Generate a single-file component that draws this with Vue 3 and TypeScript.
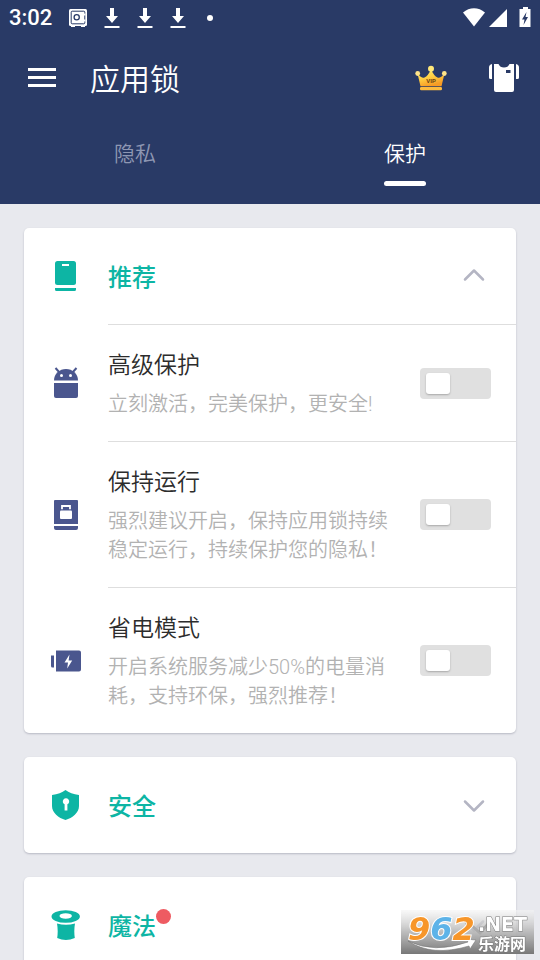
<script setup lang="ts">
import { reactive, ref } from 'vue'

interface Option {
  id: string
  icon: 'android' | 'lock' | 'battery'
  title: string
  detail: string
  enabled: boolean
}

interface Section {
  id: string
  icon: 'book' | 'shield' | 'hat'
  title: string
  open: boolean
  badge: boolean
  options: Option[]
}

const tabs = [
  { id: 'privacy', label: '隐私' },
  { id: 'protect', label: '保护' },
]
const activeTab = ref('protect')

const sections = reactive<Section[]>([
  {
    id: 'recommended',
    icon: 'book',
    title: '推荐',
    open: true,
    badge: false,
    options: [
      { id: 'advanced', icon: 'android', title: '高级保护', detail: '立刻激活，完美保护，更安全!', enabled: false },
      { id: 'alive', icon: 'lock', title: '保持运行', detail: '强烈建议开启，保持应用锁持续稳定运行，持续保护您的隐私！', enabled: false },
      { id: 'power', icon: 'battery', title: '省电模式', detail: '开启系统服务减少50%的电量消耗，支持环保，强烈推荐！', enabled: false },
    ],
  },
  { id: 'security', icon: 'shield', title: '安全', open: false, badge: false, options: [] },
  { id: 'magic', icon: 'hat', title: '魔法', open: false, badge: true, options: [] },
])
</script>

<template>
  <div class="screen">
    <header class="top">
      <div class="status">
        <span class="clock">3:02</span>
        <svg class="safe" width="20" height="20" viewBox="0 0 20 20" aria-hidden="true">
          <path d="M3 17h4v2H3zM13 17h4v2h-4z" fill="#fff" />
          <rect x="1" y="1" width="18" height="17" rx="1.5" fill="#fff" />
          <rect x="3.2" y="3.2" width="13.6" height="12.6" rx="1" fill="none" stroke="#293a66" stroke-width="1" />
          <circle cx="8.7" cy="9.3" r="2.6" fill="none" stroke="#293a66" stroke-width="1.3" />
          <path d="M16.5 5.5v2M16.5 11.5v2" stroke="#fff" stroke-width="2" />
        </svg>
        <svg v-for="n in 3" :key="n" class="download" width="16" height="22" viewBox="0 0 16 22" aria-hidden="true">
          <path d="M6 1h4v8h4l-6 7-6-7h4z" fill="#fff" />
          <path d="M0.5 20h15" stroke="#fff" stroke-width="2" />
        </svg>
        <i class="dot"></i>
        <svg class="signals" width="68" height="22" viewBox="0 0 68 22" aria-hidden="true">
          <path d="M0 5.5C6.5-.3 15.500-.3 22 5.500L11 19.500z" fill="#fff" />
          <path d="M26 20L44 2v18z" fill="#fff" />
          <path d="M60 0h5v2h2.500v18h-11V2H60z" fill="#fff" />
          <path d="M63.500 5l-4.500 7.500h2.500L60.500 18l4.500-8h-2.500z" fill="#293a66" />
        </svg>
      </div>

      <div class="appbar">
        <button class="icon-button" type="button" aria-label="菜单">
          <svg width="28" height="20" viewBox="0 0 28 20" aria-hidden="true">
            <path d="M0 1.500h28M0 9.500h28M0 17.500h28" stroke="#fff" stroke-width="3" />
          </svg>
        </button>
        <h1>应用锁</h1>
        <button class="icon-button" type="button" aria-label="VIP">
          <svg width="32" height="26" viewBox="0 0 32 26" aria-hidden="true">
            <defs>
              <linearGradient id="gold" x1="0" y1="0" x2="0.4" y2="1">
                <stop offset="0" stop-color="#fff07a" />
                <stop offset="0.550" stop-color="#ffce42" />
                <stop offset="1" stop-color="#f79a24" />
              </linearGradient>
            </defs>
            <path d="M2.500 8.500Q7 14 9.500 12.500Q13 11 16 4.500Q19 11 22.500 12.500Q25 14 29.500 8.500L26.500 21.300H5.500z" fill="url(#gold)" />
            <rect x="5" y="22" width="22" height="3.300" rx="1.200" fill="#fdbb3f" />
            <circle cx="16" cy="3.700" r="3" fill="#ffe87a" />
            <circle cx="2.700" cy="8.500" r="2.400" fill="#ffe48a" />
            <circle cx="29.300" cy="8.500" r="2.400" fill="#ffe48a" />
            <text x="16" y="18" text-anchor="middle" class="vip">VIP</text>
          </svg>
        </button>
        <button class="icon-button" type="button" aria-label="主题">
          <svg width="30" height="29" viewBox="0 0 30 29" aria-hidden="true">
            <path d="M3 0v15H1.500A1.500 1.500 0 0 1 0 13.500V3.500Q0 .5 3 0zM27 0v15h1.500a1.500 1.500 0 0 0 1.500-1.500V3.500Q30 .5 27 0z" fill="#fff" />
            <path d="M5 0h4.500Q11 3.500 15 3.500T20.500 0H25v26a2 2 0 0 1-2 2H7a2 2 0 0 1-2-2z" fill="#fff" />
            <rect x="17" y="6" width="4.500" height="3" fill="#293a66" />
          </svg>
        </button>
      </div>

      <nav class="tabs">
        <button
          v-for="tab in tabs"
          :key="tab.id"
          type="button"
          class="tab"
          :class="{ active: tab.id === activeTab }"
          @click="activeTab = tab.id"
        >
          <span>{{ tab.label }}</span>
        </button>
      </nav>
    </header>

    <main class="content">
      <section v-for="section in sections" :key="section.id" class="card">
        <button class="card-head" type="button" :aria-expanded="section.open" @click="section.open = !section.open">
          <span class="icon">
            <svg v-if="section.icon === 'book'" width="32" height="32" viewBox="0 0 32 32" aria-hidden="true">
              <rect x="5" y="1" width="21" height="24" rx="2.500" fill="#0db5a4" />
              <rect x="12" y="4" width="7" height="2" fill="#fff" />
              <path d="M5 28h21v1.500a1.500 1.500 0 0 1-1.500 1.500h-18A1.500 1.500 0 0 1 5 29.500z" fill="#0db5a4" />
            </svg>
            <svg v-else-if="section.icon === 'shield'" width="32" height="32" viewBox="0 0 32 32" aria-hidden="true">
              <path d="M15.500 1Q20.500 5 29 6v11c0 6.500-6.500 12-13.500 14C8.500 29 2 23.500 2 17V6Q10.500 5 15.500 1z" fill="#0db5a4" />
              <path d="M14.600 15.300a3.200 3.200 0 1 1 2.800 0V21.500h-2.800z" fill="#fff" />
            </svg>
            <svg v-else width="32" height="32" viewBox="0 0 32 32" aria-hidden="true">
              <path fill-rule="evenodd" d="M1.500 7.500a14.200 6.300 0 1 0 28.400 0a14.200 6.300 0 1 0-28.400 0zM9.500 7a6.200 2.700 0 1 1 12.400 0a6.200 2.700 0 1 1-12.400 0z" fill="#0db5a4" />
              <path d="M7 14.500q9 2.500 18 0-1.300 7-.2 14.500-9 4-17.600 0 1.100-7.500-.2-14.500z" fill="#0db5a4" />
            </svg>
          </span>
          <span class="card-title">{{ section.title }}<i v-if="section.badge" class="badge"></i></span>
          <svg class="chevron" :class="{ up: section.open }" width="22" height="16" viewBox="0 0 22 16" aria-hidden="true">
            <path d="M2 4.500l9 9 9-9" fill="none" stroke="#b4b5c3" stroke-width="2.500" stroke-linecap="round" stroke-linejoin="round" />
          </svg>
        </button>

        <template v-if="section.open">
          <div v-for="option in section.options" :key="option.id" class="option">
            <span class="icon">
              <svg v-if="option.icon === 'android'" width="32" height="32" viewBox="0 0 32 32" aria-hidden="true">
                <path d="M5.500 1l4.500 5M26.500 1L22 6" stroke="#4a568e" stroke-width="2" />
                <path d="M4 13.500a12 11.500 0 0 1 24 0z" fill="#4a568e" />
                <circle cx="11.500" cy="8.500" r="1.500" fill="#fff" />
                <circle cx="20.500" cy="8.500" r="1.500" fill="#fff" />
                <path d="M4 16h24v13a2 2 0 0 1-2 2H6a2 2 0 0 1-2-2z" fill="#4a568e" />
              </svg>
              <svg v-else-if="option.icon === 'lock'" width="32" height="32" viewBox="0 0 32 32" aria-hidden="true">
                <path d="M4 2q0-1 1-1h22q1 0 1 1v23H4zM4 27h24v2a2 2 0 0 1-2 2H6a2 2 0 0 1-2-2z" fill="#4a568e" />
                <rect x="10" y="11.500" width="12" height="8.500" rx="1" fill="#fff" />
                <path d="M12 10.200V7h8v3.200" fill="none" stroke="#fff" stroke-width="1.800" />
              </svg>
              <svg v-else width="32" height="32" viewBox="0 0 32 32" aria-hidden="true">
                <path d="M1 10.500h3v12H2.500A1.500 1.500 0 0 1 1 21zM6 5.500h23a2 2 0 0 1 2 2v17a2 2 0 0 1-2 2H6z" fill="#4a568e" />
                <path d="M19.500 9.500l-5 8h3.500l-.8 6 5-8h-3.600z" fill="#fff" />
              </svg>
            </span>
            <label class="text" :for="option.id">
              <span class="title">{{ option.title }}</span>
              <span class="detail">{{ option.detail }}</span>
            </label>
            <input :id="option.id" v-model="option.enabled" class="switch" type="checkbox" role="switch" />
          </div>
        </template>
      </section>
    </main>

    <aside class="watermark" aria-label="962.NET 乐游网">
      <svg width="133" height="44" viewBox="0 0 133 44">
        <defs>
          <linearGradient id="plate" x1="0" y1="0" x2="0" y2="1">
            <stop offset="0" stop-color="#f4f4f4" stop-opacity="0.600" />
            <stop offset="0.500" stop-color="#b5b5b5" stop-opacity="0.900" />
            <stop offset="1" stop-color="#777" />
          </linearGradient>
        </defs>
        <rect width="133" height="44" fill="url(#plate)" />
        <path d="M64 13h3M70 15l9 8 9-10" fill="none" stroke="#aaa" stroke-width="3" />
        <path d="M7 31q26 13 60 1l-2-3 10 1-6 9-1-3Q31 47 7 31z" fill="#fff" stroke="#777" stroke-width="0.600" />
        <text x="7" y="30" class="digits"><tspan fill="#f7962a">9</tspan><tspan fill="#5db3e8">6</tspan><tspan fill="#f7962a">2</tspan></text>
        <text x="77" y="21" class="net">.NET</text>
        <text x="77" y="40" class="site">乐游网</text>
      </svg>
    </aside>
  </div>
</template>

<style>
body {
  margin: 0;
}
</style>

<style scoped>
.screen {
  display: flex;
  flex-direction: column;
  height: 100vh;
  overflow: hidden;
  background: #e8e9ee;
  font-family: Roboto, "Noto Sans CJK SC", sans-serif;
}

button {
  padding: 0;
  border: 0;
  background: none;
  color: inherit;
  font: inherit;
  text-align: left;
  cursor: pointer;
}

svg {
  display: block;
  flex: none;
}

.top {
  flex: none;
  background: #293a66;
  color: #fff;
}

.status {
  display: flex;
  align-items: center;
  height: 36px;
  padding: 0 9px;
}

.clock {
  font-size: 22px;
  line-height: 36px;
  font-weight: 500;
}

.safe {
  margin: 0 1px 0 16px;
}

.download {
  margin-left: 17px;
}

.safe + .download {
  margin-left: 15px;
}

.dot {
  width: 6px;
  height: 6px;
  margin-left: 21px;
  border-radius: 50%;
  background: #fff;
}

.signals {
  margin-left: auto;
}

.appbar {
  display: flex;
  align-items: center;
  height: 84px;
  padding: 0 21px 0 28px;
}

.appbar h1 {
  flex: 1;
  margin: 0 0 0 34px;
  padding-top: 3px;
  font-size: 30px;
  line-height: 44px;
  font-weight: 350;
}

.icon-button + .icon-button {
  margin-left: 42px;
}

.vip {
  font-family: Roboto, sans-serif;
  font-size: 6px;
  font-weight: 700;
  fill: #6b4310;
}

.tabs {
  display: grid;
  grid-template-columns: 1fr 1fr;
  height: 84px;
}

.tab {
  display: flex;
  justify-content: center;
  align-items: flex-start;
  padding-top: 18px;
  color: #8e97b3;
  font-size: 21px;
  line-height: 32px;
  font-weight: 350;
}

.tab.active {
  color: #fff;
}

.tab.active span::after {
  content: "";
  display: block;
  height: 5px;
  margin-top: 11px;
  border-radius: 3px;
  background: #fff;
}

.content {
  display: flex;
  flex: 1;
  flex-direction: column;
  gap: 24px;
  min-height: 0;
  padding: 24px;
  overflow-y: auto;
  scrollbar-width: none;
}

.card {
  flex: none;
  border-radius: 5px;
  background: #fff;
  box-shadow: 0 1px 2px rgba(40, 45, 70, 0.25);
}

.card-head {
  display: flex;
  align-items: center;
  width: 100%;
  height: 96px;
  padding: 0 31px 0 26px;
}

.icon {
  flex: none;
  width: 58px;
}

.card-title {
  position: relative;
  padding-top: 4px;
  color: #0db5a4;
  font-size: 24px;
  line-height: 36px;
  font-weight: 500;
}

.badge {
  position: absolute;
  top: 4px;
  left: 100%;
  width: 15px;
  height: 15px;
  border-radius: 50%;
  background: #ee5b62;
}

.chevron {
  margin-left: auto;
}

.chevron.up {
  transform: rotate(180deg);
}

.option {
  display: flex;
  align-items: center;
  padding: 1px 25px 0 26px;
  background: linear-gradient(#dedede, #dedede) 84px 0 / 100% 1px no-repeat;
}

.text {
  display: flex;
  flex: 1;
  flex-direction: column;
  gap: 8px;
  padding: 25px 24px 22px 0;
}

.title {
  color: #2c2c2c;
  font-size: 23px;
  line-height: 32px;
  font-weight: 350;
}

.detail {
  color: #b2b2b2;
  font-size: 20px;
  line-height: 29px;
  font-weight: 350;
}

.switch {
  appearance: none;
  display: flex;
  flex: none;
  align-items: center;
  width: 71px;
  height: 31px;
  margin: 0;
  padding: 0 6px;
  border-radius: 4px;
  background: #e0e0e0;
  cursor: pointer;
}

.switch::before {
  content: "";
  width: 24px;
  height: 21px;
  border-radius: 3px;
  background: #fff;
  box-shadow: 0 1px 2px rgba(0, 0, 0, 0.25);
}

.switch:checked {
  justify-content: flex-end;
  background: #0db5a4;
}

.watermark {
  position: fixed;
  right: 6px;
  bottom: 6px;
}

.digits {
  font-family: "DejaVu Sans", sans-serif;
  font-size: 32px;
  font-style: italic;
  font-weight: 700;
  stroke: #fff;
  stroke-width: 2px;
  paint-order: stroke;
}

.net {
  font-family: "DejaVu Sans", sans-serif;
  font-size: 19px;
  font-weight: 700;
  fill: #fff;
  stroke: #777;
  stroke-width: 1px;
  paint-order: stroke;
}

.site {
  font-family: "Noto Sans CJK SC", sans-serif;
  font-size: 16px;
  font-weight: 700;
  fill: #fff;
  stroke: #777;
  stroke-width: 1px;
  paint-order: stroke;
}
</style>
